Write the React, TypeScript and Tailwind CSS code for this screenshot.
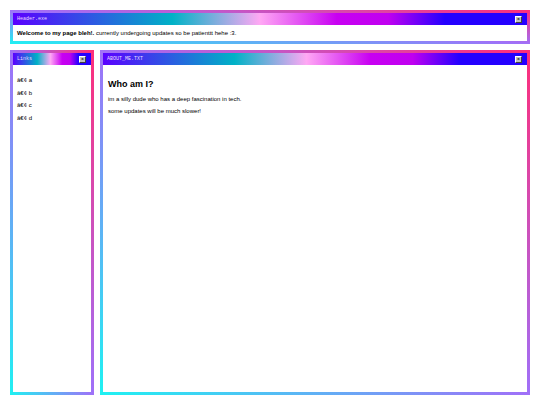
import React from 'react';

const titleGradient =
  'bg-[linear-gradient(90deg,#5a00ff_0%,#00b2c6_31%,#ffa8f4_48%,#c800f2_63%,#c000f0_73%,#2400ff_84%,#2400ff_100%)]';

const CloseBtn: React.FC = () => (
  <div className="w-[7px] h-[7px] bg-[#c0c0c0] border border-t-white border-l-white border-r-[#404040] border-b-[#404040] flex items-center justify-center">
    <span className="text-[4px] leading-none font-bold text-black" style={{ fontFamily: '"Liberation Mono", monospace' }}>X</span>
  </div>
);

const Win: React.FC<{ title: string; className?: string; children: React.ReactNode }> = ({ title, className = '', children }) => (
  <div className={`p-[3px] bg-[linear-gradient(to_top_right,#1ef2f2_0%,#a070f8_50%,#ff2d78_100%)] flex flex-col ${className}`}>
    <div className="bg-white flex flex-col flex-1 min-h-0">
      <div className={`h-[12px] ${titleGradient} flex items-center justify-between pl-[4px] pr-[5px]`}>
        <span className="text-[5px] leading-none text-[#e8dcff]" style={{ fontFamily: '"Liberation Mono", monospace' }}>{title}</span>
        <CloseBtn />
      </div>
      {children}
    </div>
  </div>
);

export default function App() {
  return (
    <div className="w-[540px] h-[405px] bg-white p-[10px] flex flex-col gap-[6px]" style={{ fontFamily: '"Liberation Sans", Arial, sans-serif' }}>
      <Win title="Header.exe" className="h-[34px] shrink-0">
        <div className="flex-1 flex items-center px-[4px] pt-[1px] text-[6px] text-black">
          <p><b>Welcome to my page bleh!.</b> currently undergoing updates so be patienttt hehe :3.</p>
        </div>
      </Win>

      <div className="flex gap-[6px] h-[346px]">
        <Win title="Links" className="w-[84px]">
          <ul className="pt-[12px] px-[4px] flex flex-col gap-[6.7px] text-[6px] leading-[6px] text-black">
            <li>â€¢ a</li>
            <li>â€¢ b</li>
            <li>â€¢ c</li>
            <li>â€¢ d</li>
          </ul>
        </Win>

        <Win title="ABOUT_ME.TXT" className="flex-1">
          <div className="px-[5px] pt-[15px] text-black">
            <h1 className="text-[9px] leading-[9px] font-bold">Who am I?</h1>
            <p className="text-[6px] leading-[6px] mt-[7px]">im a silly dude who has a deep fascination in tech.</p>
            <p className="text-[6px] leading-[6px] mt-[6px]">some updates will be much slower!</p>
          </div>
        </Win>
      </div>
    </div>
  );
}
